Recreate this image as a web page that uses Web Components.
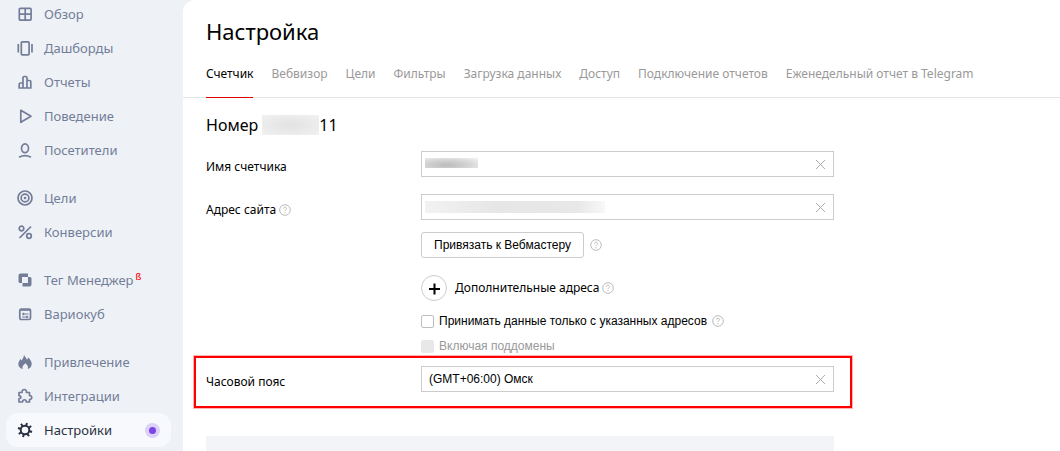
<!DOCTYPE html>
<html lang="ru">
<head>
<meta charset="utf-8">
<meta name="viewport" content="width=device-width, initial-scale=1">
<title>Настройка</title>
<style>
  body {
    margin: 0;
    background: #eef2f7;
    color: #000;
    font: 12px/16px "Noto Sans", "Open Sans", sans-serif;
    --ui-font: "Liberation Sans", Arial, sans-serif;
    --line: #ccc;
  }
</style>
</head>
<body>
<settings-app>
  <side-nav slot="nav">
    <nav-group>
      <nav-item icon="grid">Обзор</nav-item>
      <nav-item icon="boards">Дашборды</nav-item>
      <nav-item icon="chart">Отчеты</nav-item>
      <nav-item icon="play">Поведение</nav-item>
      <nav-item icon="person">Посетители</nav-item>
    </nav-group>
    <nav-group>
      <nav-item icon="target">Цели</nav-item>
      <nav-item icon="percent">Конверсии</nav-item>
    </nav-group>
    <nav-group>
      <nav-item icon="tag" badge="ß">Тег Менеджер</nav-item>
      <nav-item icon="vario">Вариокуб</nav-item>
    </nav-group>
    <nav-group>
      <nav-item icon="fire">Привлечение</nav-item>
      <nav-item icon="puzzle">Интеграции</nav-item>
      <nav-item icon="gear" active>Настройки</nav-item>
    </nav-group>
  </side-nav>

  <page-title>Настройка</page-title>
  <tab-bar>
    <tab-link active>Счетчик</tab-link>
    <tab-link>Вебвизор</tab-link>
    <tab-link>Цели</tab-link>
    <tab-link>Фильтры</tab-link>
    <tab-link>Загрузка данных</tab-link>
    <tab-link>Доступ</tab-link>
    <tab-link>Подключение отчетов</tab-link>
    <tab-link>Еженедельный отчет в Telegram</tab-link>
  </tab-bar>
  <counter-form></counter-form>
</settings-app>

<script>
const icons = {
  grid: '<rect x="2.300" y="2.300" width="11.800" height="11.800" rx="1"/><path d="M8.200 2v12M2 8.200h12"/>',
  boards: '<rect x="4.300" y="1.800" width="7.800" height="13" rx="1"/><path d="M1.300 4v8.500M15 4v8.500"/>',
  chart: '<path d="M6 14V3.800q0-1.300 1.300-1.300h1.400q1.300 0 1.300 1.300V14M6 9H3.500Q2.200 9 2.200 10.300V14h11.600V7.800q0-1.300-1.300-1.300H10"/>',
  play: '<path d="M3.800 2.300v12L14 8.300z" stroke-linejoin="round"/>',
  person: '<ellipse cx="8" cy="6.300" rx="3.500" ry="4.400"/><path d="M2 15.200q6-3.200 12 0"/>',
  target: '<circle cx="8" cy="8" r="7"/><circle cx="8" cy="8" r="3.900"/><circle cx="8" cy="8" r="1.300" fill="currentColor" stroke="none"/>',
  percent: '<circle cx="4.500" cy="4.500" r="2.300"/><circle cx="12" cy="12" r="2.300"/><path d="M14 2.500L2.500 14"/>',
  tag: '<path d="M1.500 3.500q0-2 2-2H11v3.500H5V11H3q-1.500 0-1.500-1.500z" fill="currentColor" stroke="none"/><path d="M14.500 12.500q0 2-2 2H5.500V11H11V5h2q1.500 0 1.500 1.500z" fill="currentColor" stroke="none"/>',
  vario: '<rect x="2.800" y="3" width="10.700" height="10.500" rx="1.500"/><path d="M3 4h10"/><path d="M5 8h6.500M5 11h6.500" stroke-width="1.100"/><path d="M6.500 6.800v2.400M10 9.800v2.400" stroke-width="1.500"/>',
  fire: '<path d="M7 .8c.5 2 2.500 3 3 5 .8-.7 1-1.500 1-2.500 2.500 2.500 3.700 4.500 3.700 6.500 0 2.500-1.500 4.700-4 5.400 1-3-.7-4.500-2.200-6-2 1.500-3.700 3.200-2.900 6C3 14.400 1.300 12.300 1.300 10c0-2 1.200-3 1.900-5 .7.400 1 .9 1.200 1.500C5.800 5 7 3 7 .8z" fill="currentColor" stroke="none"/>',
  puzzle: '<path d="M2 4.500h3c-.5-4 5-4 4.500 0h3v3c3-.3 3 4.300 0 4v2.500H9.300c0-3-3.800-3-3.800 0H2v-3.300c2.500 0 2.500-3 0-3z" stroke-linejoin="round"/>',
  gear: '<circle cx="8" cy="8" r="4.300"/><path d="M9 4L10 1M7 12L6 15M4 7L1 6M12 9l3 1M6 4.500L4 1.800M10 11.500l2 2.700M4.500 10l-2.700 2M11.500 6l2.700-2"/>'
};

// shared base: puts the markup of the class into an open shadow root
class BaseElement extends HTMLElement {
  constructor() {
    super();
    this.attachShadow({ mode: 'open' });
  }
  connectedCallback() {
    this.shadowRoot.innerHTML = this.render();
  }
}

class SettingsApp extends BaseElement {
  render() {
    return `
      <style>
        :host { display: grid; grid-template-columns: 183px minmax(0, 1fr); min-height: 100vh; }
        main { display: flex; flex-direction: column; background: #fff; border-top-left-radius: 12px; }
      </style>
      <slot name="nav"></slot>
      <main><slot></slot></main>
    `;
  }
}

class SideNav extends BaseElement {
  render() {
    return `
      <style>
        :host { display: block; }
        nav { display: flex; flex-direction: column; gap: 14px; margin-top: -3px; padding: 0 12px 0 6px; }
      </style>
      <nav><slot></slot></nav>
    `;
  }
}

class NavGroup extends BaseElement {
  render() {
    return `
      <style>:host { display: flex; flex-direction: column; }</style>
      <slot></slot>
    `;
  }
}

class NavItem extends BaseElement {
  render() {
    const badge = this.getAttribute('badge');
    return `
      <style>
        :host { display: block; color: #737d98; font-size: 13px; }
        :host([active]) { color: #2c3042; }
        a {
          display: flex; align-items: center; height: 34px; padding: 0 11px;
          border-radius: 12px; color: inherit; text-decoration: none; white-space: nowrap;
        }
        :host([active]) a { background: #f7f9fd; }
        svg { width: 16px; height: 16px; margin-right: 11px; fill: none; stroke: currentColor; stroke-width: 1.7; }
        :host([active]) svg { stroke-width: 2; }
        sup { align-self: flex-start; margin: 6px 0 0 2px; color: #f00; font-size: 9px; font-weight: 500; }
        i { width: 7px; height: 7px; margin-left: auto; border: 4px solid #dcd1f7; border-radius: 50%; background: #7b45e5; }
      </style>
      <a href="#">
        <svg viewBox="0 0 16 16" aria-hidden="true">${icons[this.getAttribute('icon')]}</svg>
        <slot></slot>
        ${badge ? `<sup>${badge}</sup>` : ''}
        ${this.hasAttribute('active') ? '<i></i>' : ''}
      </a>
    `;
  }
}

class PageTitle extends BaseElement {
  render() {
    return `
      <style>
        :host { display: block; padding: 17px 23px 0; }
        h1 { margin: 0; font-size: 22px; line-height: 28px; font-weight: 400; }
      </style>
      <h1><slot></slot></h1>
    `;
  }
}

class TabBar extends BaseElement {
  render() {
    return `
      <style>
        :host { display: block; margin-top: 19px; border-bottom: 1px solid #e5e5e5; }
        nav { display: flex; gap: 18px; padding: 0 23px; margin-bottom: -1px; }
      </style>
      <nav><slot></slot></nav>
    `;
  }
}

class TabLink extends BaseElement {
  render() {
    return `
      <style>
        :host { display: block; color: #999; white-space: nowrap; }
        a { display: block; padding: 2px 0 15px; border-bottom: 1px solid transparent; color: inherit; text-decoration: none; }
        :host([active]) a { color: #000; border-color: #e00000; }
      </style>
      <a href="#"><slot></slot></a>
    `;
  }
}

class HelpHint extends BaseElement {
  render() {
    return `
      <style>
        :host { display: inline-flex; vertical-align: middle; }
        button { display: flex; padding: 0; border: 0; background: none; color: #bbb; }
        svg { width: 12px; height: 12px; fill: none; stroke: currentColor; }
      </style>
      <button type="button" aria-label="Справка">
        <svg viewBox="0 0 12 12"><circle cx="6" cy="6" r="5.300"/><path d="M4.500 4.700c0-2 3-2 3 0 0 1.100-1.500 1.100-1.500 2.300M6 8v1.200"/></svg>
      </button>
    `;
  }
}

class TextField extends BaseElement {
  render() {
    const hidden = this.getAttribute('hidden-value');
    return `
      <style>
        :host { display: grid; grid-template-columns: 215px minmax(0, 1fr); }
        .name { display: flex; align-items: center; gap: 3px; padding-top: 5px; }
        .box { display: flex; align-items: center; box-sizing: border-box; height: 26px; border: 1px solid var(--line); background: #fff; }
        input { flex: 1; min-width: 0; padding: 0 7px; border: 0; outline: 0; background: none; color: #000; font: 12px/16px var(--ui-font); }
        .blur { height: 12px; margin-left: 3px; }
        .short { width: 53px; height: 10px; margin-bottom: 2px; background: radial-gradient(ellipse at 40% 70%, #bbb, #d4d4d4 50%, #f4f4f4); }
        .long { width: 180px; background: linear-gradient(90deg, #f2f2f2, #e6e6e6 40%, #e8e8e8 85%, #f8f8f8); }
        button { display: flex; padding: 0; margin-right: 7px; border: 0; background: none; color: #aaa; }
        svg { width: 11px; height: 11px; fill: none; stroke: currentColor; }
      </style>
      <div class="name">
        <label for="field">${this.getAttribute('label')}</label>
        ${this.hasAttribute('help') ? '<help-hint></help-hint>' : ''}
      </div>
      <div class="box">
        ${hidden ? `<span class="blur ${hidden}"></span>` : ''}
        <input id="field" type="text" value="${this.getAttribute('value') || ''}">
        <button type="button" aria-label="Очистить">
          <svg viewBox="0 0 11 11"><path d="M1 1l9 9M10 1l-9 9"/></svg>
        </button>
      </div>
    `;
  }
}

class CheckBox extends BaseElement {
  render() {
    return `
      <style>
        :host { display: flex; align-items: center; gap: 5px; font: 12px/16px var(--ui-font); }
        :host([disabled]) { color: #999; }
        label { display: flex; align-items: center; gap: 5px; }
        input { appearance: none; box-sizing: border-box; width: 13px; height: 13px; margin: 0; border: 1px solid #bfbfbf; border-radius: 2px; background: #fff; }
        input:disabled { border-color: #e8e8e8; background: #e8e8e8; }
      </style>
      <label>
        <input type="checkbox" ${this.hasAttribute('disabled') ? 'disabled' : ''}>
        <slot></slot>
      </label>
      ${this.hasAttribute('help') ? '<help-hint></help-hint>' : ''}
    `;
  }
}

class MarkFrame extends BaseElement {
  render() {
    return `
      <style>
        :host { display: block; margin: 2px -18px 0 -12px; padding: 8px 16px 14px 10px; border: 2px solid #f00; box-shadow: 0 0 0 1px #ffb3b3; }
      </style>
      <slot></slot>
    `;
  }
}

class CounterForm extends BaseElement {
  render() {
    return `
      <style>
        :host { display: flex; flex-direction: column; flex: 1; width: 100%; max-width: 674px; box-sizing: border-box; padding: 17px 23px 0; }
        h2 { display: flex; align-items: center; gap: 4px; margin: 0 0 16px; font-size: 16px; line-height: 20px; font-weight: 400; }
        h2 span { display: flex; align-items: center; }
        h2 i { width: 57px; height: 20px; background: radial-gradient(ellipse, #e2e2e2, #f1f1f1); }
        text-field + text-field { margin-top: 17px; }
        .extra { display: flex; flex-direction: column; padding: 12px 0 0 215px; }
        .row { display: flex; align-items: center; gap: 6px; margin-bottom: 17px; }
        .bind { height: 26px; padding: 0 12px; border: 1px solid var(--line); border-radius: 3px; background: #fff; color: #000; font: 12px/16px var(--ui-font); }
        .add { display: flex; align-items: center; gap: 8px; padding: 0; border: 0; background: none; color: #000; font: inherit; }
        .add svg { width: 26px; height: 26px; fill: none; stroke: #000; stroke-width: 2; }
        .add circle { stroke: var(--line); stroke-width: 1; }
        .extra .last { gap: 3px; margin-bottom: 12px; }
        check-box + check-box { margin-top: 9px; }
        .panel { flex: 1; margin-top: 28px; background: #f3f4f7; }
      </style>
      <h2>Номер <span><i></i>11</span></h2>
      <text-field label="Имя счетчика" hidden-value="short"></text-field>
      <text-field label="Адрес сайта" hidden-value="long" help></text-field>
      <div class="extra">
        <div class="row">
          <button class="bind" type="button">Привязать к Вебмастеру</button>
          <help-hint></help-hint>
        </div>
        <div class="row last">
          <button class="add" type="button">
            <svg viewBox="0 0 26 26"><circle cx="13" cy="13" r="12.500"/><path d="M8 14h11M13.500 8.500v11"/></svg>
            Дополнительные адреса
          </button>
          <help-hint></help-hint>
        </div>
        <check-box help>Принимать данные только с указанных адресов</check-box>
        <check-box disabled>Включая поддомены</check-box>
      </div>
      <mark-frame>
        <text-field label="Часовой пояс" value="(GMT+06:00) Омск"></text-field>
      </mark-frame>
      <div class="panel"></div>
    `;
  }
}

customElements.define('settings-app', SettingsApp);
customElements.define('side-nav', SideNav);
customElements.define('nav-group', NavGroup);
customElements.define('nav-item', NavItem);
customElements.define('page-title', PageTitle);
customElements.define('tab-bar', TabBar);
customElements.define('tab-link', TabLink);
customElements.define('help-hint', HelpHint);
customElements.define('text-field', TextField);
customElements.define('check-box', CheckBox);
customElements.define('mark-frame', MarkFrame);
customElements.define('counter-form', CounterForm);
</script>
</body>
</html>
